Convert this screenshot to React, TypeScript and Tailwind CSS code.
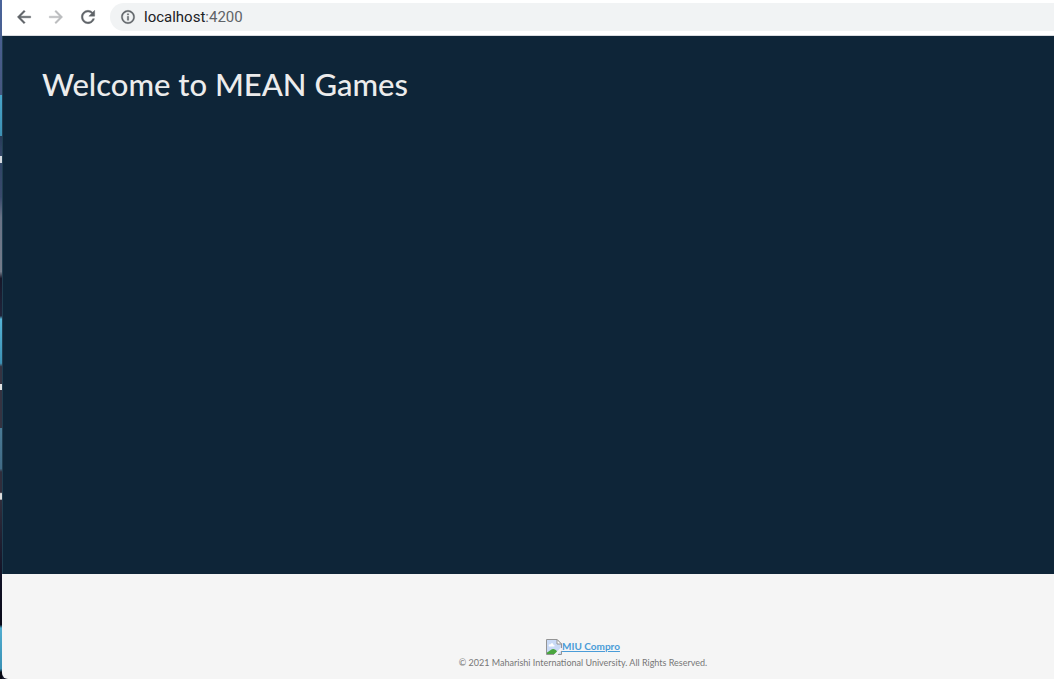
import type { ReactNode } from "react";

function Glyph({ d, className }: { d: string; className: string }) {
  return (
    <svg viewBox="0 0 24 24" className={className} fill="currentColor" aria-hidden="true">
      <path d={d} stroke="currentColor" strokeWidth="0.5" />
    </svg>
  );
}

const glyphs = {
  back: "M20 11H7.830l5.590-5.590L12 4l-8 8 8 8 1.410-1.410L7.830 13H20v-2z",
  forward: "M12 4l-1.410 1.410L16.170 11H4v2h12.170l-5.580 5.590L12 20l8-8z",
  reload:
    "M17.650 6.350C16.200 4.900 14.210 4 12 4c-4.420 0-7.990 3.580-7.990 8s3.570 8 7.990 8c3.730 0 6.840-2.550 7.730-6h-2.080c-.82 2.330-3.040 4-5.650 4-3.310 0-6-2.690-6-6s2.690-6 6-6c1.660 0 3.140.69 4.220 1.780L13 11h7V4l-2.350 2.350z",
  info: "M11 7h2v2h-2zm0 4h2v6h-2zm1-9C6.480 2 2 6.480 2 12s4.480 10 10 10 10-4.480 10-10S17.520 2 12 2zm0 18c-4.410 0-8-3.590-8-8s3.590-8 8-8 8 3.590 8 8-3.590 8-8 8z",
};

function ToolbarButton({ label, disabled, children }: { label: string; disabled?: boolean; children: ReactNode }) {
  return (
    <button
      type="button"
      aria-label={label}
      disabled={disabled}
      className="flex size-5 items-center justify-center text-[#5f6368] disabled:text-[#babcbe]"
    >
      {children}
    </button>
  );
}

function Toolbar() {
  return (
    <div className="flex h-9 shrink-0 items-center border-b border-[#dadce0] bg-white pb-px pl-3">
      <div className="flex items-center gap-3">
        <ToolbarButton label="Back">
          <Glyph d={glyphs.back} className="size-5" />
        </ToolbarButton>
        <ToolbarButton label="Forward" disabled>
          <Glyph d={glyphs.forward} className="size-5" />
        </ToolbarButton>
        <ToolbarButton label="Reload">
          <Glyph d={glyphs.reload} className="size-5" />
        </ToolbarButton>
      </div>
      <a
        href="#top"
        className="ml-3 flex h-7 flex-1 items-center gap-2 rounded-l-full bg-[#f1f3f4] pl-2.5 font-[Roboto,sans-serif] text-[15px] leading-5 text-[#202124]"
      >
        <Glyph d={glyphs.info} className="size-4 text-[#5f6368]" />
        <span>
          localhost<span className="text-[#5f6368]">:4200</span>
        </span>
      </a>
    </div>
  );
}

function BrokenImageIcon() {
  return (
    <svg viewBox="0 0 16 16" className="size-4 shrink-0" aria-hidden="true">
      <path d="M.5.5H11L15.500 5v10.500H.5z" fill="#c9daf6" />
      <path d="M3 7.500C2 6 3.500 5 4.500 5.500 5 3.500 7.500 4 7.500 6 9 6 9 7.500 8 7.500z" fill="#fff" />
      <path d="M1 15v-1.500c2.500-1 4-4 6.500-3.500 2 .3 3.500 1.500 4.500 5z" fill="#4aa63e" />
      <path d="M15.500 8 8 15.500h3.500l4-4z" fill="#f5f5f5" />
      <path d="M8 15.500H.5V.5H11L15.500 5v4M15.500 12v3.500H12" fill="none" stroke="#949494" />
      <path d="M11 .5V5h4.500z" fill="#fff" stroke="#949494" />
    </svg>
  );
}

export default function App() {
  return (
    <div id="top" className="flex min-h-screen bg-[#17182a] font-[Lato,sans-serif]">
      <div
        aria-hidden="true"
        className="w-0.5 shrink-0 bg-[linear-gradient(to_bottom,#4a649b_0%,#46577f_14%,#48a5ca_14%,#3d91b4_20%,#263b58_20%,#344768_23%,#d5d9df_23%,#d5d9df_24%,#304566_24%,#394a6c_29%,#697386_32%,#747c8a_40%,#17182a_41%,#20243a_46.500%,#55b4d7_47%,#3d91b4_53.500%,#353341_54%,#353341_56.500%,#e1e1e1_56.500%,#e1e1e1_57.500%,#353341_57.500%,#353341_63%,#4a7b96_63%,#416b86_69%,#302d3b_69.500%,#302d3b_72.500%,#dddddd_72.700%,#dddddd_73.500%,#302d3b_73.700%,#111226_85%,#090a19_92%,#51add0_92.500%,#3991b5_98.500%,#070813_99%)]"
      />
      <div className="flex min-w-0 flex-1 flex-col overflow-hidden rounded-bl-md bg-[#f5f5f5]">
        <Toolbar />
        <main className="flex-1 border-l border-[#203e50] bg-[#0e2538] px-10 py-7">
          <h1 className="-ml-px text-[31px] leading-10 font-medium text-[#ececec]">Welcome to MEAN Games</h1>
        </main>
        <footer className="flex shrink-0 flex-col items-center pt-[65px] pb-2 pl-[110px]">
          <a href="#miu" className="flex items-start text-[10px] leading-[14px] font-bold text-[#4a9cd8] underline">
            <BrokenImageIcon />
            MIU Compro
          </a>
          <p className="text-[9px] leading-4 text-[#777777]">
            © 2021 Maharishi International University. All Rights Reserved.
          </p>
        </footer>
      </div>
    </div>
  );
}
